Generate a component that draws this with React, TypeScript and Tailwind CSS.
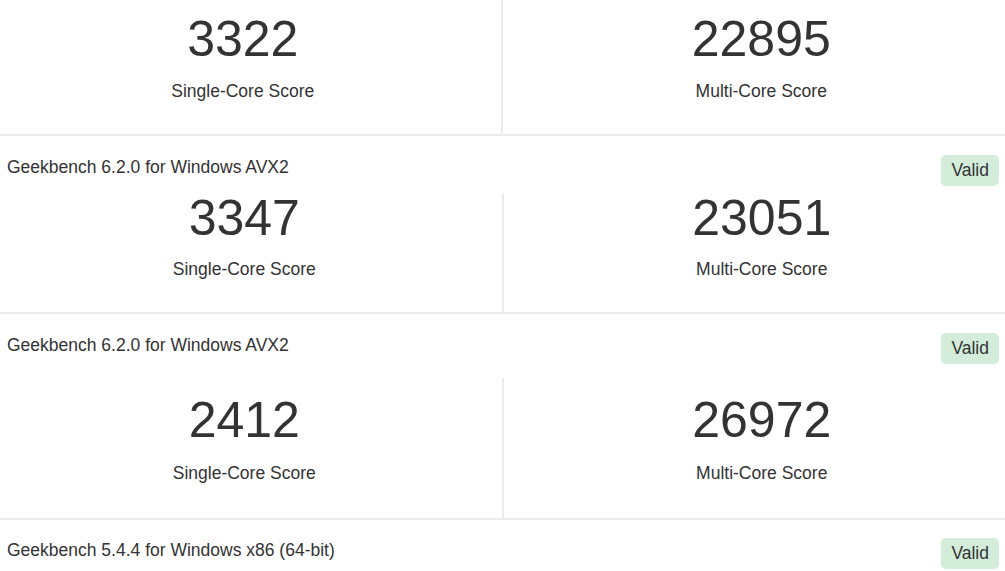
type Score = { single: number; multi: number };

type ResultProps = {
  title?: string;
  score: Score;
  shift?: string;
  headPad?: string;
  gridPad?: string;
  labelGap?: string;
};

function ScoreCells({ score, gridPad, labelGap, shift }: { score: Score; gridPad: string; labelGap: string; shift: string }) {
  return (
    <div className={`grid grid-cols-2 ${shift}`}>
      <div className={`flex flex-col items-center border-r-2 border-[#ececec] ${gridPad}`}>
        <div className="text-[50px] leading-[50px]">{score.single}</div>
        <div className={`text-[17.5px] leading-[25px] ${labelGap}`}>Single-Core Score</div>
      </div>
      <div className={`flex flex-col items-center ${gridPad}`}>
        <div className="text-[50px] leading-[50px]">{score.multi}</div>
        <div className={`text-[17.5px] leading-[25px] ${labelGap}`}>Multi-Core Score</div>
      </div>
    </div>
  );
}

function Badge() {
  return (
    <span className="h-[31px] rounded-[5px] bg-[#d4edda] px-[10px] text-[17.5px] leading-[31px] text-[#333]">
      Valid
    </span>
  );
}

function Result({ title, score, shift = '', headPad = 'pt-[19px]', gridPad = 'pt-0 pb-[31px]', labelGap = 'mt-[13px]' }: ResultProps) {
  return (
    <section className="border-b-2 border-[#ebebeb]">
      {title && (
        <div className={`flex items-start justify-between pl-[20px] pr-[21px] ${headPad}`}>
          <span className="text-[17.5px] leading-[25px]">{title}</span>
          <Badge />
        </div>
      )}
      <ScoreCells score={score} gridPad={gridPad} labelGap={labelGap} shift={shift} />
    </section>
  );
}

export default function App() {
  return (
    <div className="h-[571px] w-[1005px] overflow-hidden bg-white text-[#333]" style={{ fontFamily: '"Liberation Sans", Arial, sans-serif' }}>
      <div className="ml-[-13px] w-[1033px]">
        {/* tail of the previous result */}
        <Result score={{ single: 3322, multi: 22895 }} shift="ml-[-2px]" gridPad="pt-[14px] pb-[30px]" labelGap="mt-[15px]" />

        <Result
          title="Geekbench 6.2.0 for Windows AVX2"
          score={{ single: 3347, multi: 23051 }}
          headPad="pt-[19px] pb-[7px]"
          gridPad="pt-0 pb-[30px]"
          labelGap="mt-[14px]"
        />

        <Result
          title="Geekbench 6.2.0 for Windows AVX2"
          score={{ single: 2412, multi: 26972 }}
          headPad="pt-[19px] pb-[14px]"
          gridPad="pt-[17px] pb-[32px]"
          labelGap="mt-[16px]"
        />

        <section>
          <div className="flex items-start justify-between pl-[20px] pr-[21px] pt-[18px]">
            <span className="text-[17.5px] leading-[25px]">Geekbench 5.4.4 for Windows x86 (64-bit)</span>
            <Badge />
          </div>
        </section>
      </div>
    </div>
  );
}
